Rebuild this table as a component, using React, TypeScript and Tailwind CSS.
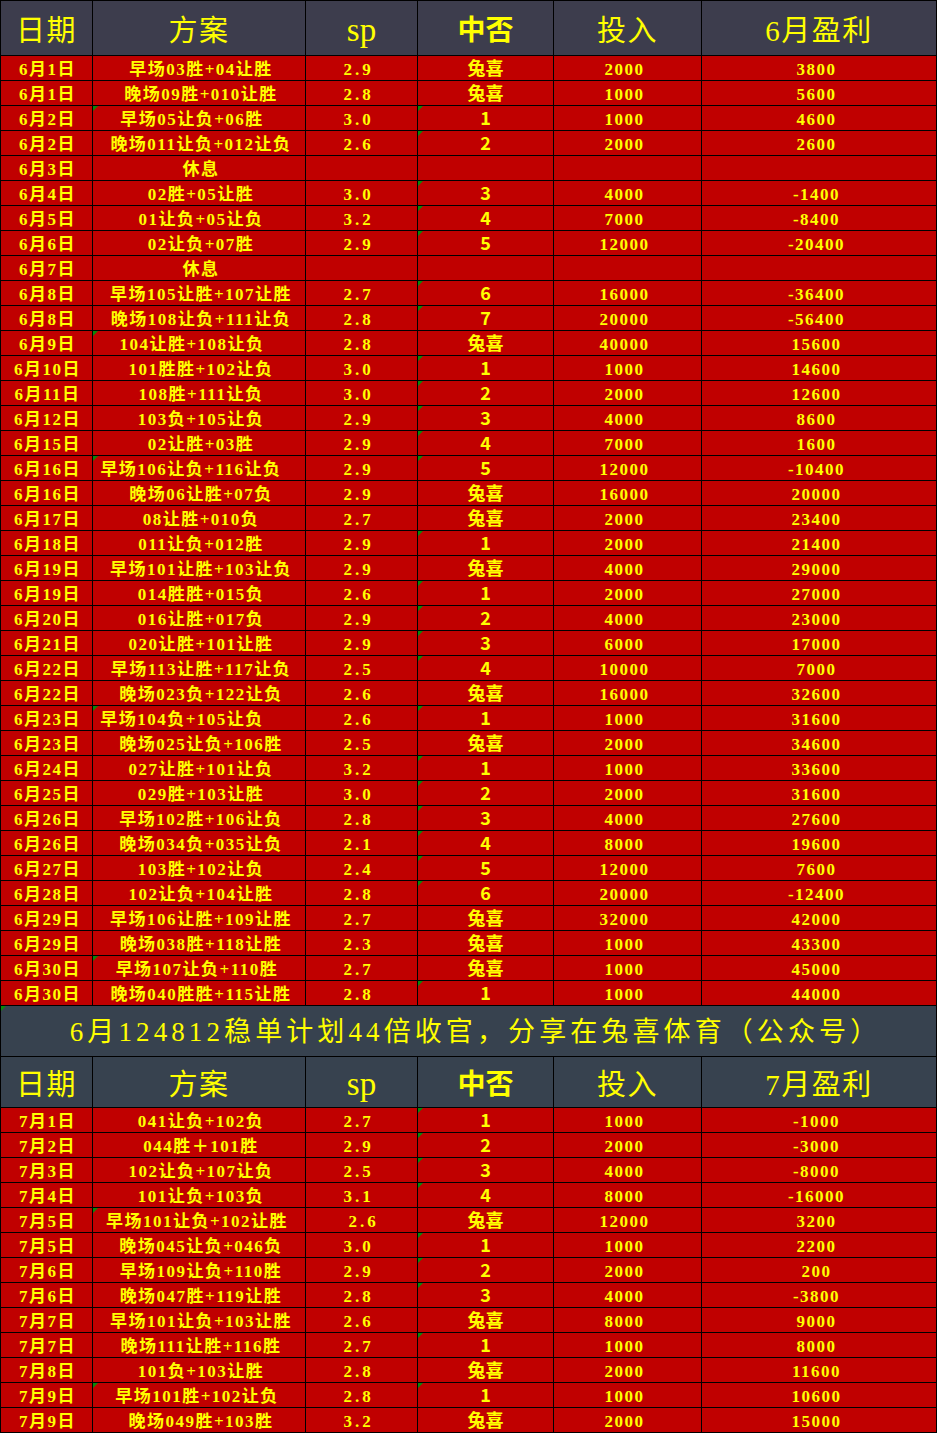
import React from "react";

type R = {
  d: string;
  p: string;
  sp?: string;
  r?: string;
  inv?: string;
  pr?: string;
  shift?: string;
  tri?: boolean;
  spCls?: string;
};

const june: R[] = [
  { d: "6月1日", p: "早场03胜+04让胜", sp: "2.9", r: "兔喜", inv: "2000", pr: "3800" },
  { d: "6月1日", p: "晚场09胜+010让胜", sp: "2.8", r: "兔喜", inv: "1000", pr: "5600" },
  { d: "6月2日", p: "早场05让负+06胜", sp: "3.0", r: "1", inv: "1000", pr: "4600", shift: "-translate-x-[9px]", tri: true },
  { d: "6月2日", p: "晚场011让负+012让负", sp: "2.6", r: "2", inv: "2000", pr: "2600" },
  { d: "6月3日", p: "休息" },
  { d: "6月4日", p: "02胜+05让胜", sp: "3.0", r: "3", inv: "4000", pr: "-1400" },
  { d: "6月5日", p: "01让负+05让负", sp: "3.2", r: "4", inv: "7000", pr: "-8400" },
  { d: "6月6日", p: "02让负+07胜", sp: "2.9", r: "5", inv: "12000", pr: "-20400" },
  { d: "6月7日", p: "休息" },
  { d: "6月8日", p: "早场105让胜+107让胜", sp: "2.7", r: "6", inv: "16000", pr: "-36400" },
  { d: "6月8日", p: "晚场108让负+111让负", sp: "2.8", r: "7", inv: "20000", pr: "-56400" },
  { d: "6月9日", p: "104让胜+108让负", sp: "2.8", r: "兔喜", inv: "40000", pr: "15600", shift: "-translate-x-[9px]", tri: true },
  { d: "6月10日", p: "101胜胜+102让负", sp: "3.0", r: "1", inv: "1000", pr: "14600" },
  { d: "6月11日", p: "108胜+111让负", sp: "3.0", r: "2", inv: "2000", pr: "12600" },
  { d: "6月12日", p: "103负+105让负", sp: "2.9", r: "3", inv: "4000", pr: "8600" },
  { d: "6月15日", p: "02让胜+03胜", sp: "2.9", r: "4", inv: "7000", pr: "1600" },
  { d: "6月16日", p: "早场106让负+116让负", sp: "2.9", r: "5", inv: "12000", pr: "-10400", shift: "-translate-x-[10px]", tri: true },
  { d: "6月16日", p: "晚场06让胜+07负", sp: "2.9", r: "兔喜", inv: "16000", pr: "20000" },
  { d: "6月17日", p: "08让胜+010负", sp: "2.7", r: "兔喜", inv: "2000", pr: "23400" },
  { d: "6月18日", p: "011让负+012胜", sp: "2.9", r: "1", inv: "2000", pr: "21400" },
  { d: "6月19日", p: "早场101让胜+103让负", sp: "2.9", r: "兔喜", inv: "4000", pr: "29000" },
  { d: "6月19日", p: "014胜胜+015负", sp: "2.6", r: "1", inv: "2000", pr: "27000" },
  { d: "6月20日", p: "016让胜+017负", sp: "2.9", r: "2", inv: "4000", pr: "23000" },
  { d: "6月21日", p: "020让胜+101让胜", sp: "2.9", r: "3", inv: "6000", pr: "17000" },
  { d: "6月22日", p: "早场113让胜+117让负", sp: "2.5", r: "4", inv: "10000", pr: "7000" },
  { d: "6月22日", p: "晚场023负+122让负", sp: "2.6", r: "兔喜", inv: "16000", pr: "32600" },
  { d: "6月23日", p: "早场104负+105让负", sp: "2.6", r: "1", inv: "1000", pr: "31600", shift: "-translate-x-[19px]", tri: true },
  { d: "6月23日", p: "晚场025让负+106胜", sp: "2.5", r: "兔喜", inv: "2000", pr: "34600" },
  { d: "6月24日", p: "027让胜+101让负", sp: "3.2", r: "1", inv: "1000", pr: "33600" },
  { d: "6月25日", p: "029胜+103让胜", sp: "3.0", r: "2", inv: "2000", pr: "31600" },
  { d: "6月26日", p: "早场102胜+106让负", sp: "2.8", r: "3", inv: "4000", pr: "27600" },
  { d: "6月26日", p: "晚场034负+035让负", sp: "2.1", r: "4", inv: "8000", pr: "19600" },
  { d: "6月27日", p: "103胜+102让负", sp: "2.4", r: "5", inv: "12000", pr: "7600" },
  { d: "6月28日", p: "102让负+104让胜", sp: "2.8", r: "6", inv: "20000", pr: "-12400" },
  { d: "6月29日", p: "早场106让胜+109让胜", sp: "2.7", r: "兔喜", inv: "32000", pr: "42000" },
  { d: "6月29日", p: "晚场038胜+118让胜", sp: "2.3", r: "兔喜", inv: "1000", pr: "43300" },
  { d: "6月30日", p: "早场107让负+110胜", sp: "2.7", r: "兔喜", inv: "1000", pr: "45000", shift: "-translate-x-[4px]", tri: true },
  { d: "6月30日", p: "晚场040胜胜+115让胜", sp: "2.8", r: "1", inv: "1000", pr: "44000" },
];

const july: R[] = [
  { d: "7月1日", p: "041让负+102负", sp: "2.7", r: "1", inv: "1000", pr: "-1000" },
  { d: "7月2日", p: "044胜＋101胜", sp: "2.9", r: "2", inv: "2000", pr: "-3000" },
  { d: "7月3日", p: "102让负+107让负", sp: "2.5", r: "3", inv: "4000", pr: "-8000" },
  { d: "7月4日", p: "101让负+103负", sp: "3.1", r: "4", inv: "8000", pr: "-16000" },
  { d: "7月5日", p: "早场101让负+102让胜", sp: "2.6", r: "兔喜", inv: "12000", pr: "3200", shift: "-translate-x-[4px]", tri: true, spCls: "translate-x-[5px]" },
  { d: "7月5日", p: "晚场045让负+046负", sp: "3.0", r: "1", inv: "1000", pr: "2200" },
  { d: "7月6日", p: "早场109让负+110胜", sp: "2.9", r: "2", inv: "2000", pr: "200" },
  { d: "7月6日", p: "晚场047胜+119让胜", sp: "2.8", r: "3", inv: "4000", pr: "-3800" },
  { d: "7月7日", p: "早场101让负+103让胜", sp: "2.6", r: "兔喜", inv: "8000", pr: "9000" },
  { d: "7月7日", p: "晚场111让胜+116胜", sp: "2.7", r: "1", inv: "1000", pr: "8000" },
  { d: "7月8日", p: "101负+103让胜", sp: "2.8", r: "兔喜", inv: "2000", pr: "11600" },
  { d: "7月9日", p: "早场101胜+102让负", sp: "2.8", r: "1", inv: "1000", pr: "10600", shift: "-translate-x-[4px]", tri: true },
  { d: "7月9日", p: "晚场049胜+103胜", sp: "3.2", r: "兔喜", inv: "2000", pr: "15000" },
];

const GRID = "grid grid-cols-[91px_212px_111px_135px_147px_234px] gap-px";
const SERIF = "[font-family:'Liberation_Serif','Noto_Sans_CJK_SC',serif]";
const SANS = "[font-family:'Noto_Sans_CJK_SC','Liberation_Sans',sans-serif]";

function Tri() {
  return (
    <span className="absolute left-0 top-0 w-0 h-0 border-t-[5px] border-r-[5px] border-t-[#0a8a0a] border-r-transparent" />
  );
}

function DataRow({ row }: { row: R }) {
  const cell =
    "relative bg-[#c00000] h-[24px] flex items-center justify-center text-[#ffff00] whitespace-nowrap";
  const txt = `${SERIF} font-bold text-[17px] leading-none tracking-[1.5px] pt-[3px]`;
  const numeric = row.r !== undefined && row.r !== "兔喜";
  return (
    <div className={GRID}>
      <div className={`${cell} ${txt} pl-[2px]`}>{row.d}</div>
      <div className={`${cell} ${txt} pl-[4px]`}>
        {row.tri && <Tri />}
        <span className={row.shift ?? ""}>{row.p}</span>
      </div>
      <div className={`${cell} ${SERIF} font-bold text-[17px] leading-none tracking-[3px] pt-[3px] pr-[6px]`}>
        <span className={row.spCls ?? ""}>{row.sp ? row.sp : ""}</span>
      </div>
      <div className={`${cell} ${SANS} font-bold text-[18px] leading-none`}>
        {numeric && <Tri />}
        <span className="-translate-y-[1px]">{row.r ?? ""}</span>
      </div>
      <div className={`${cell} ${txt} pr-[6px]`}>{row.inv ?? ""}</div>
      <div className={`${cell} ${txt} pr-[5px]`}>{row.pr ?? ""}</div>
    </div>
  );
}

function Header({ month, h, bg }: { month: string; h: string; bg: string }) {
  const cell = `${bg} ${h} flex items-center justify-center text-[#ffff00] whitespace-nowrap`;
  const serif = `${SERIF} font-normal text-[29px] leading-none tracking-[1.5px] pt-[6px]`;
  return (
    <div className={GRID}>
      <div className={`${cell} ${serif}`}>日期</div>
      <div className={`${cell} ${serif}`}>方案</div>
      <div className={`${cell} ${SERIF} text-[33px] leading-none pt-[4px]`}>sp</div>
      <div className={`${cell} ${SANS} font-bold text-[28px] leading-none pb-[1px]`}>中否</div>
      <div className={`${cell} ${serif}`}>投入</div>
      <div className={`${cell} ${serif}`}>{month}月盈利</div>
    </div>
  );
}

export default function App() {
  return (
    <div className="w-[937px] bg-black p-px flex flex-col gap-px">
      <Header month="6" h="h-[54px]" bg="bg-[#3d3d4d]" />
      {june.map((r, i) => (
        <DataRow key={"j" + i} row={r} />
      ))}
      <div className="relative h-[50px] bg-[#37424f] flex items-center justify-center">
        <Tri />
        <span className={`${SERIF} text-[27px] leading-none tracking-[4.1px] text-[#ffff00] whitespace-nowrap pt-[2px] pl-[14px]`}>
          6月124812稳单计划44倍收官，分享在兔喜体育（公众号）
        </span>
      </div>
      <Header month="7" h="h-[50px]" bg="bg-[#37424f]" />
      {july.map((r, i) => (
        <DataRow key={"k" + i} row={r} />
      ))}
    </div>
  );
}
